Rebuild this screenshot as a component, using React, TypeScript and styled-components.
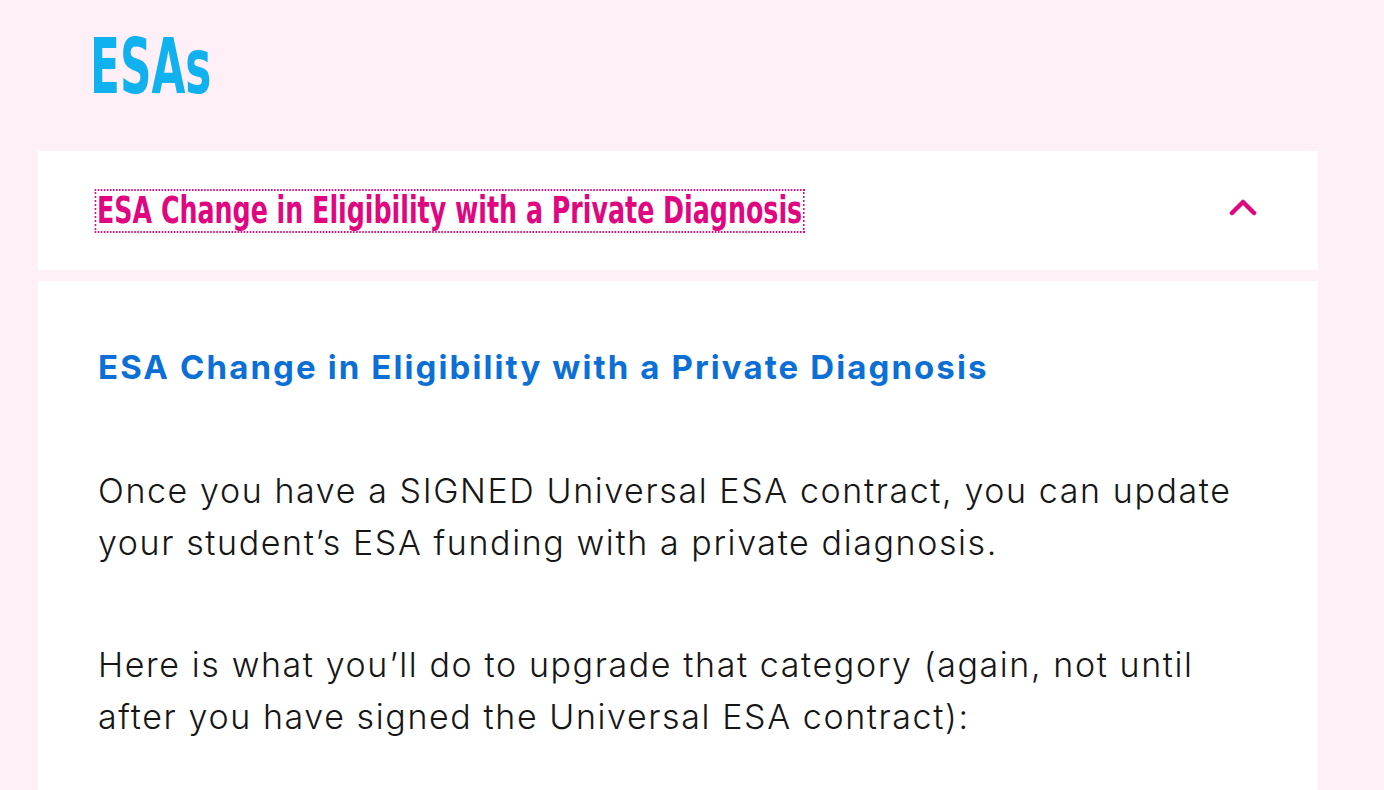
import React from "react"
import styled, { createGlobalStyle } from "styled-components"

const GlobalStyle = createGlobalStyle`
  html, body {
    margin: 0;
    padding: 0;
    background: #fff0f7;
  }
  body {
    font-family: Inter, "Open Sans", sans-serif;
    color: #1a1a1a;
  }
`

const Page = styled.div`
  width: 1280px;
  margin-left: 38px;
  padding-top: 27px;
`

const PageTitle = styled.h1`
  margin: 0 0 0 52px;
  height: 124px;
  font-family: "DejaVu Sans Condensed", "Liberation Sans", sans-serif;
  font-weight: 700;
  font-size: 76px;
  line-height: 80px;
  color: #0fb1ef;
  transform: scaleX(0.64);
  transform-origin: left top;
`

const AccordionHeader = styled.button`
  display: flex;
  align-items: center;
  justify-content: space-between;
  width: 100%;
  height: 119px;
  padding: 0 61px 0 59px;
  border: 0;
  background: #ffffff;
  cursor: pointer;
  box-sizing: border-box;
`

const HeaderLabel = styled.span`
  font-family: "DejaVu Sans Condensed", "Liberation Sans", sans-serif;
  font-weight: 700;
  font-size: 37px;
  line-height: 38px;
  color: #e0067f;
  outline: 2px dotted #e0067f;
  outline-offset: 1px;
  display: inline-block;
  transform: scaleX(0.76);
  transform-origin: left center;
`

const Chevron = styled.svg`
  width: 28px;
  height: 18px;
  margin-bottom: 6px;
  color: #e0067f;
`

const Panel = styled.div`
  margin-top: 11px;
  background: #ffffff;
  padding: 64px 60px 80px 60px;
  min-height: 600px;
  box-sizing: border-box;
`

const PanelHeading = styled.h2`
  margin: 0 0 76px 0;
  font-family: Inter, "Open Sans", sans-serif;
  font-weight: 700;
  font-size: 33px;
  line-height: 44px;
  letter-spacing: 2.1px;
  color: #0b6fd6;
`

const Paragraph = styled.p`
  margin: 0 0 70px 0;
  font-family: Inter, "Open Sans", sans-serif;
  font-weight: 300;
  font-size: 34px;
  line-height: 52px;
  letter-spacing: 1.6px;
  color: #161616;
`

export default function App() {
  return (
    <>
      <GlobalStyle />
      <Page>
        <PageTitle>ESAs</PageTitle>
        <AccordionHeader>
          <HeaderLabel>ESA Change in Eligibility with a Private Diagnosis</HeaderLabel>
          <Chevron viewBox="0 0 28 18" fill="none">
            <path
              d="M3 14 L14 3 L25 14"
              stroke="currentColor"
              strokeWidth="4.5"
              strokeLinecap="round"
              strokeLinejoin="round"
            />
          </Chevron>
        </AccordionHeader>
        <Panel>
          <PanelHeading>ESA Change in Eligibility with a Private Diagnosis</PanelHeading>
          <Paragraph>
            Once you have a SIGNED Universal ESA contract, you can update your student’s ESA
            funding with a private diagnosis.
          </Paragraph>
          <Paragraph>
            Here is what you’ll do to upgrade that category (again, not until after you have
            signed the Universal ESA contract):
          </Paragraph>
        </Panel>
      </Page>
    </>
  )
}
